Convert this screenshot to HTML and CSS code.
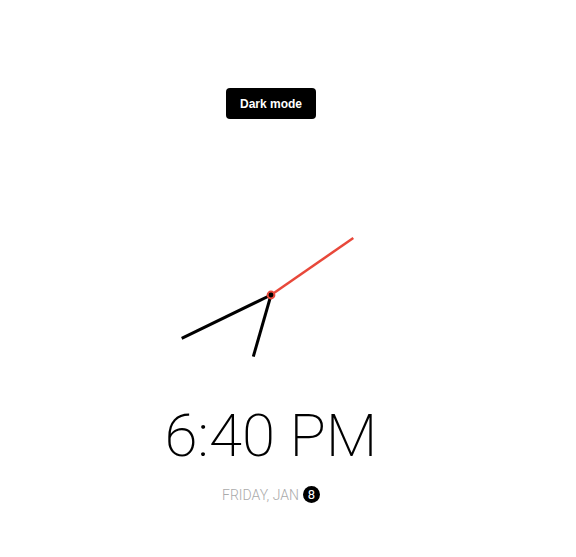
FILE: index.html
```html
<!DOCTYPE html>
<html>
<head>
<meta charset="utf-8">
<link rel="stylesheet" href="styles.css">
</head>
<body>
<div class="app">
  <button class="toggle">Dark mode</button>
  <svg class="clock" width="200" height="200" viewBox="0 0 200 200">
    <line class="hand minute" x1="100" y1="100" x2="10.7" y2="143.3"/>
    <line class="hand hour" x1="100" y1="100" x2="82.3" y2="161.7"/>
    <line class="hand second" x1="100" y1="100" x2="182.3" y2="43"/>
    <circle class="pin" cx="100" cy="100" r="3.4"/>
  </svg>
  <div class="time">6:40 PM</div>
  <div class="date">FRIDAY, JAN <span class="day">8</span></div>
</div>
</body>
</html>
```
FILE: styles.css
```css
html, body {
  margin: 0;
  padding: 0;
  background: #fff;
}
.app {
  width: 542px;
  display: flex;
  flex-direction: column;
  align-items: center;
  padding-top: 88px;
  font-family: Roboto, "Liberation Sans", sans-serif;
}
.toggle {
  height: 31px;
  width: 90px;
  padding: 0;
  border: none;
  border-radius: 4px;
  background: #000;
  color: #fff;
  font-family: "Liberation Sans", Arial, sans-serif;
  font-weight: bold;
  font-size: 12px;
}
.clock {
  display: block;
  margin-top: 76px;
}
.hand {
  stroke: #000;
  stroke-width: 3;
  stroke-linecap: butt;
}
.second {
  stroke: #e8483a;
  stroke-width: 2.5;
}
.pin {
  fill: #000;
  stroke: #e8483a;
  stroke-width: 2;
}
.time {
  margin-top: 5px;
  font-size: 60px;
  font-weight: 200;
  color: #000;
  line-height: 1.2;
}
.date {
  margin-top: 14px;
  font-size: 14px;
  font-weight: 300;
  color: #aaa;
  display: flex;
  align-items: center;
  gap: 4px;
}
.day {
  display: inline-flex;
  align-items: center;
  justify-content: center;
  width: 17px;
  height: 17px;
  border-radius: 50%;
  background: #000;
  color: #fff;
  font-size: 13px;
  font-weight: 400;
}
```
